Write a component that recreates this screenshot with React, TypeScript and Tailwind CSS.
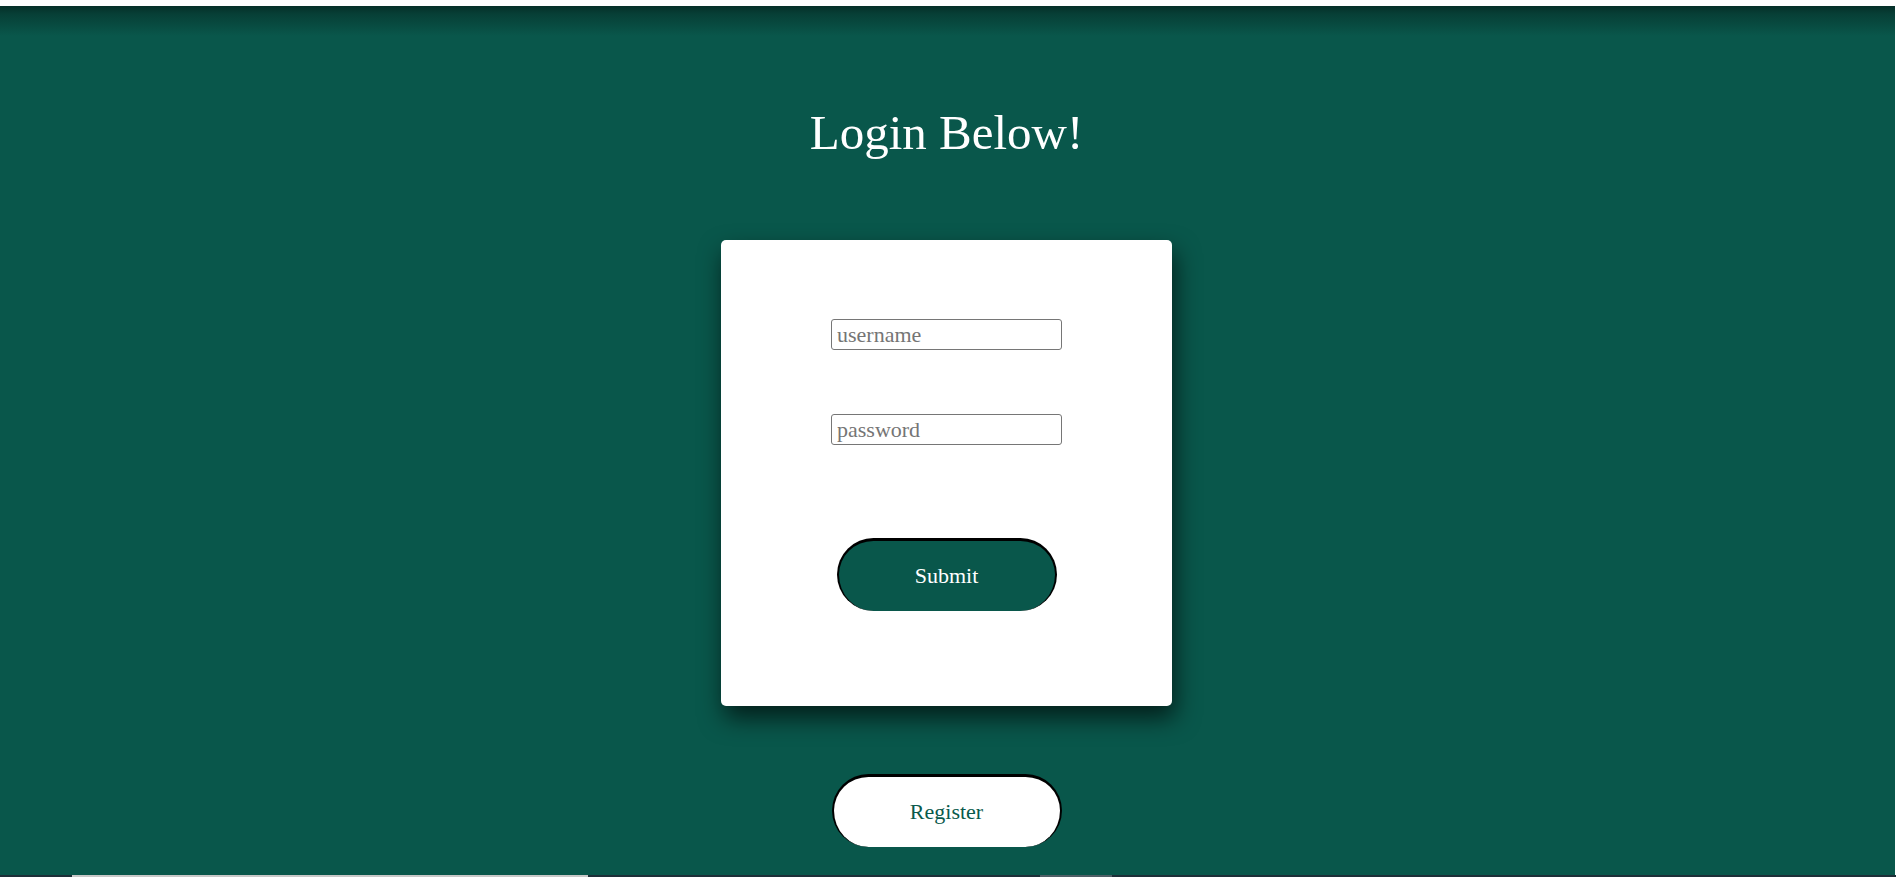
import React from "react";

export default function App() {
  const serif = { fontFamily: '"Liberation Serif", "Times New Roman", serif' };
  return (
    <div className="w-[1896px] h-[877px] bg-white overflow-hidden flex flex-col" style={serif}>
      <div className="h-[6px] shrink-0 bg-white" />
      <div className="w-[1895px] h-[869px] shrink-0 bg-[#09574b] bg-[linear-gradient(to_bottom,#052f28_0px,#073f36_8px,#09574b_30px)] flex flex-col items-center pt-[99px] pr-[2px]">
        <h1 className="text-[49px] leading-[56px] text-white font-normal">Login Below!</h1>
        <div className="mt-[79px] w-[451px] h-[466px] bg-white rounded-[5px] shadow-[3px_12px_24px_rgba(0,0,0,0.65)] flex flex-col items-center pt-[79px]">
          <input
            type="text"
            placeholder="username"
            className="w-[231px] h-[31px] border border-[#767676] rounded-[3px] px-[5px] text-[22px] leading-none text-black placeholder:text-[#757575] outline-none"
            style={serif}
          />
          <input
            type="password"
            placeholder="password"
            className="mt-[64px] w-[231px] h-[31px] border border-[#767676] rounded-[3px] px-[5px] text-[22px] leading-none text-black placeholder:text-[#757575] outline-none"
            style={serif}
          />
          <button
            className="mt-[93px] w-[220px] h-[73px] rounded-full bg-[#09574b] border-2 border-t-[3px] border-b-0 border-black text-white text-[22px] leading-none"
            style={serif}
          >
            Submit
          </button>
        </div>
        <button
          className="mt-[68px] w-[230px] h-[73px] rounded-full bg-white border-2 border-t-[3px] border-b-0 border-black text-[#0a5a4c] text-[22px] leading-none"
          style={serif}
        >
          Register
        </button>
      </div>
      <div className="h-[2px] shrink-0 w-full bg-[#1d2f38] flex">
        <div className="w-[72px]" />
        <div className="w-[516px] bg-[#c8c8c8]" />
        <div className="w-[452px]" />
        <div className="w-[72px] bg-[#4f5f66]" />
      </div>
    </div>
  );
}
